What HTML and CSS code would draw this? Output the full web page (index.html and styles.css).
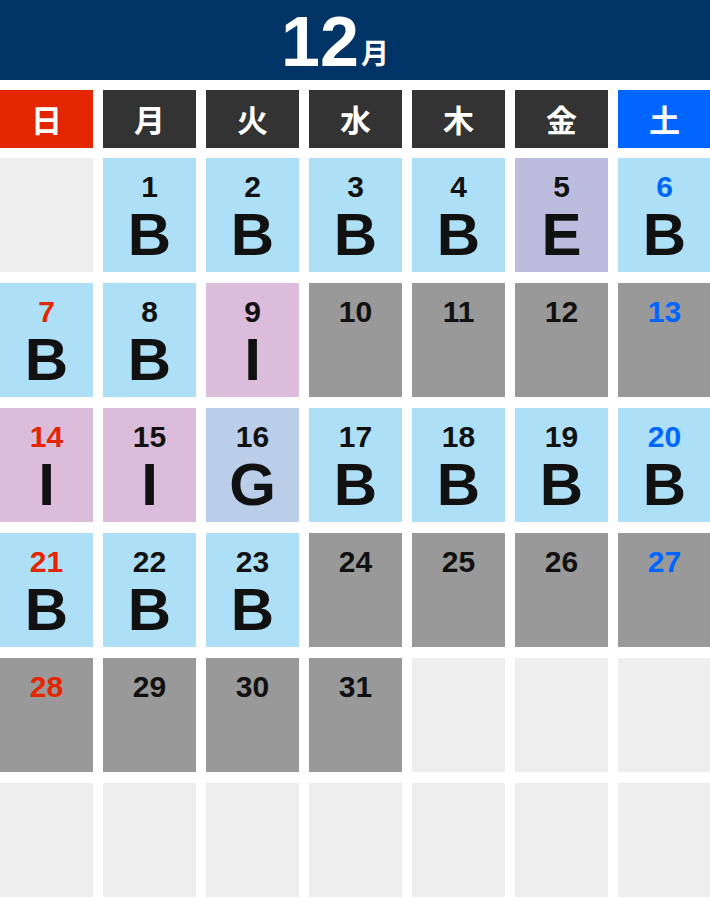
FILE: index.html
```html
<!DOCTYPE html>
<html lang="ja">
<head>
    <meta charset="UTF-8">
    <title>12月</title>
    <link rel="stylesheet" href="styles.css">
</head>
<body>
    <div class="month"><span class="num">12</span><span class="unit">月</span></div>

    <div class="week">
        <div class="sun">日</div>
        <div>月</div>
        <div>火</div>
        <div>水</div>
        <div>木</div>
        <div>金</div>
        <div class="sat">土</div>
    </div>

    <div class="days">
        <div class="day empty"></div>
        <div class="day b"><span class="d">1</span><span class="t">B</span></div>
        <div class="day b"><span class="d">2</span><span class="t">B</span></div>
        <div class="day b"><span class="d">3</span><span class="t">B</span></div>
        <div class="day b"><span class="d">4</span><span class="t">B</span></div>
        <div class="day e"><span class="d">5</span><span class="t">E</span></div>
        <div class="day b sat"><span class="d">6</span><span class="t">B</span></div>

        <div class="day b sun"><span class="d">7</span><span class="t">B</span></div>
        <div class="day b"><span class="d">8</span><span class="t">B</span></div>
        <div class="day i"><span class="d">9</span><span class="t">I</span></div>
        <div class="day off"><span class="d">10</span></div>
        <div class="day off"><span class="d">11</span></div>
        <div class="day off"><span class="d">12</span></div>
        <div class="day off sat"><span class="d">13</span></div>

        <div class="day i sun"><span class="d">14</span><span class="t">I</span></div>
        <div class="day i"><span class="d">15</span><span class="t">I</span></div>
        <div class="day g"><span class="d">16</span><span class="t">G</span></div>
        <div class="day b"><span class="d">17</span><span class="t">B</span></div>
        <div class="day b"><span class="d">18</span><span class="t">B</span></div>
        <div class="day b"><span class="d">19</span><span class="t">B</span></div>
        <div class="day b sat"><span class="d">20</span><span class="t">B</span></div>

        <div class="day b sun"><span class="d">21</span><span class="t">B</span></div>
        <div class="day b"><span class="d">22</span><span class="t">B</span></div>
        <div class="day b"><span class="d">23</span><span class="t">B</span></div>
        <div class="day off"><span class="d">24</span></div>
        <div class="day off"><span class="d">25</span></div>
        <div class="day off"><span class="d">26</span></div>
        <div class="day off sat"><span class="d">27</span></div>

        <div class="day off sun"><span class="d">28</span></div>
        <div class="day off"><span class="d">29</span></div>
        <div class="day off"><span class="d">30</span></div>
        <div class="day off"><span class="d">31</span></div>
        <div class="day empty"></div>
        <div class="day empty"></div>
        <div class="day empty"></div>

        <div class="day empty"></div>
        <div class="day empty"></div>
        <div class="day empty"></div>
        <div class="day empty"></div>
        <div class="day empty"></div>
        <div class="day empty"></div>
        <div class="day empty"></div>
    </div>
</body>
</html>
```

FILE: styles.css
```css
body {
    margin: 0;
    background: #fff;
    font-family: "Liberation Sans", "Noto Sans CJK JP", sans-serif;
    color: #111;
    overflow: hidden;
}

.month {
    height: 80px;
    background-color: #003366;
    color: #fff;
    text-align: center;
    padding-right: 40px;
    line-height: 80px;
    font-weight: bold;
}
.month .num {
    font-size: 70px;
    position: relative;
    top: 2px;
}
.month .unit {
    font-size: 28px;
    font-family: "Noto Sans CJK JP", sans-serif;
    margin-left: 2px;
}

.week,
.days {
    display: grid;
    grid-template-columns: repeat(7, 1fr);
    column-gap: 10px;
    width: 711px;
}

.week {
    margin-top: 10px;
}
.week div {
    height: 58px;
    line-height: 58px;
    text-align: center;
    background-color: #333;
    color: #fff;
    font-family: "Noto Sans CJK JP", sans-serif;
    font-weight: bold;
    font-size: 31px;
}
.week .sun {
    background-color: #e32600;
}
.week .sat {
    background-color: #0066ff;
}

.days {
    margin-top: 10px;
    grid-auto-rows: 114px;
    row-gap: 11px;
}

.day {
    display: flex;
    flex-direction: column;
    align-items: center;
    padding-top: 14px;
    box-sizing: border-box;
    font-weight: bold;
}
.day .d {
    font-size: 30px;
    line-height: 30px;
}
.day .t {
    font-size: 60px;
    line-height: 60px;
    margin-top: 3px;
}

.day.sun .d {
    color: #e32600;
}
.day.sat .d {
    color: #0066ff;
}

.b { background-color: #addff6; }
.e { background-color: #bcbcde; }
.i { background-color: #dcbcdb; }
.g { background-color: #bacde9; }
.off { background-color: #999; }
.empty { background-color: #eee; }
```
